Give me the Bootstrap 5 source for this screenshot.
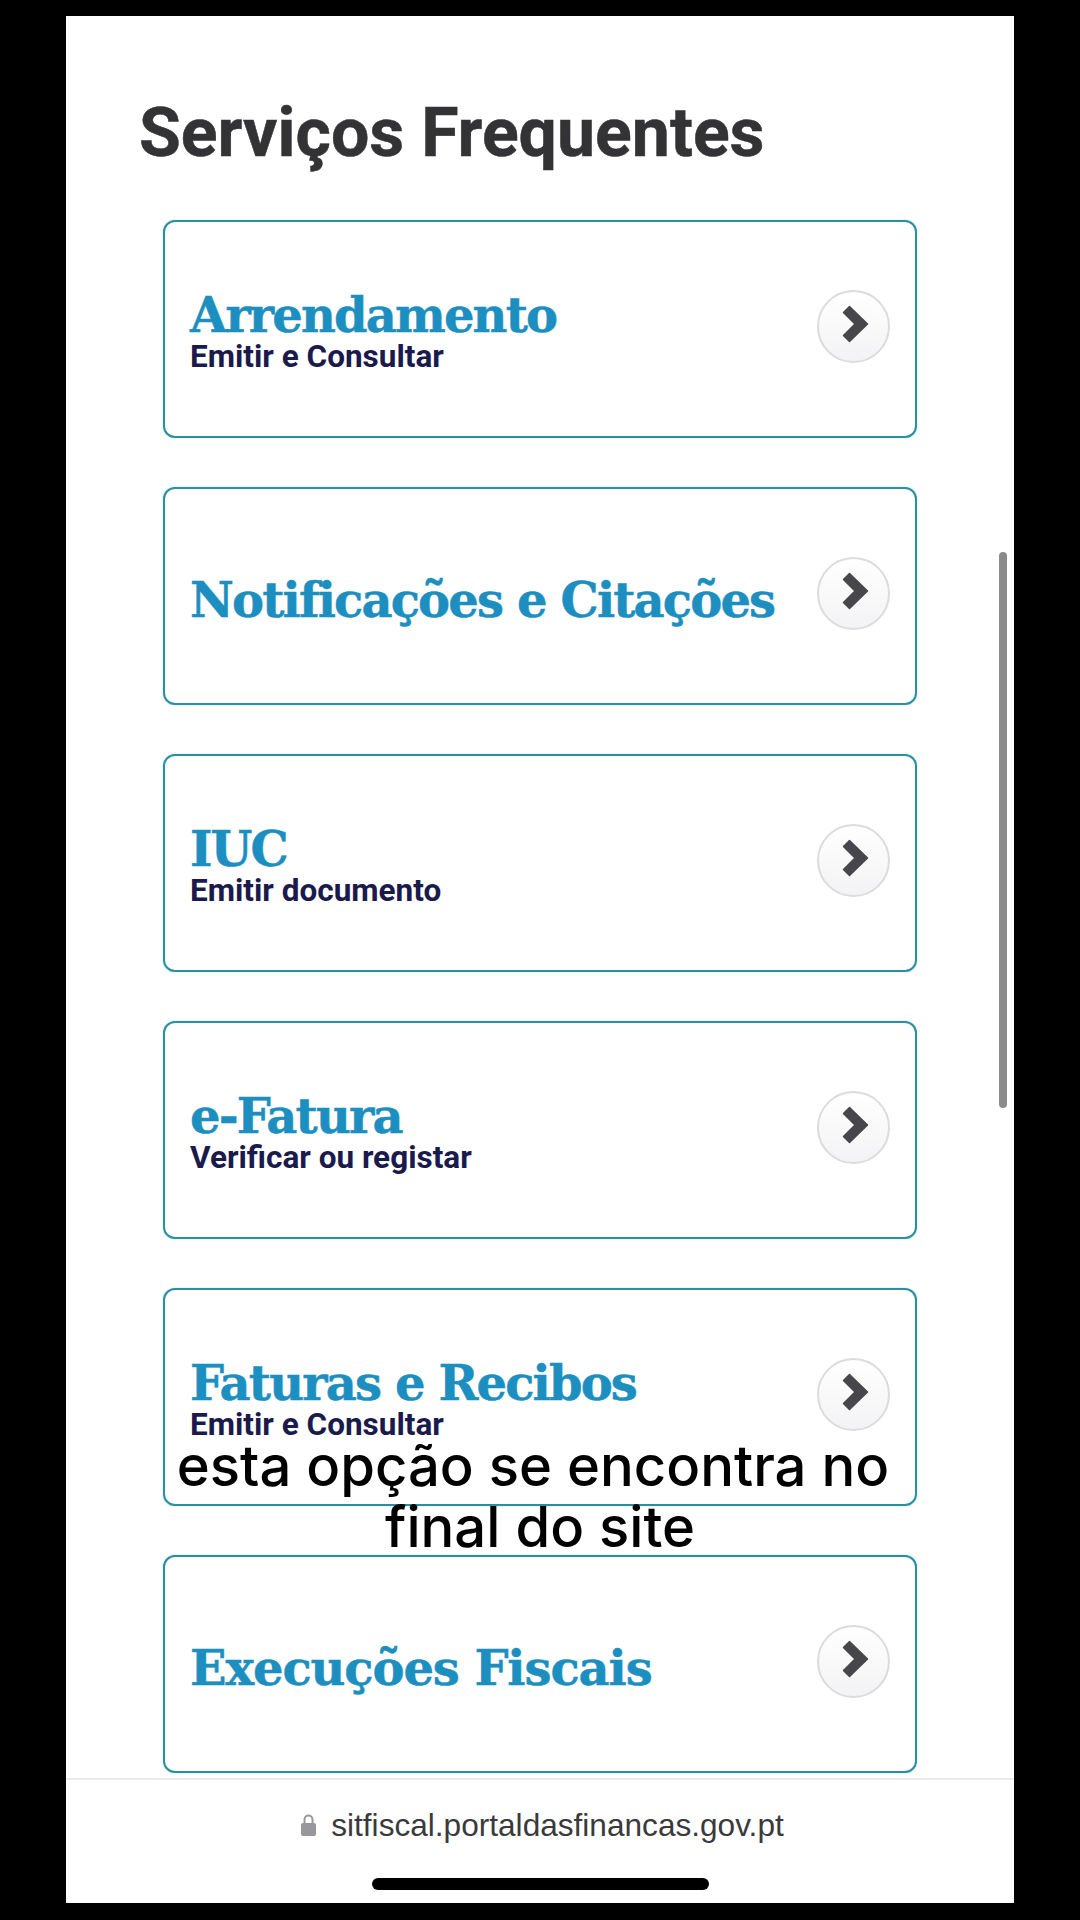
<!doctype html>
<html lang="pt">
<head>
<meta charset="utf-8">
<title>Serviços Frequentes</title>
<link href="https://cdn.jsdelivr.net/npm/bootstrap@5.3.0/dist/css/bootstrap.min.css" rel="stylesheet">
<style>
html,body{height:100%;background:#000;margin:0;overflow:hidden}
.stage{width:1080px;height:1920px;padding:16px 66px 17px;background:#000}
.screen{height:100%;background:#fff;position:relative;overflow:hidden}
.page-area{min-height:0;padding:80px 97px 0 74px}
.page-title{font-family:Roboto,sans-serif;font-weight:700;font-size:68px;line-height:74px;color:#333336;margin:0 0 50px -1px;-webkit-text-stroke:.5px #333336}
.svc-list{gap:49px;margin-left:23px}
.svc-card{height:218px;border:2px solid #2c8ea3;border-radius:12px;padding:0 25px;flex:0 0 auto;box-shadow:0 0 2px rgba(90,200,220,.55)}
.svc-text{padding-top:2px}
.svc-solo{padding-top:7px}
.svc-title{font-family:"DejaVu Serif",serif;font-weight:700;font-size:48px;line-height:52px;color:#1c8fc0;letter-spacing:-1.85px;white-space:nowrap;-webkit-text-stroke:.5px #1c8fc0}
.svc-wide{letter-spacing:-1.1px}
.svc-sub{font-family:Roboto,sans-serif;font-weight:700;font-size:31.5px;line-height:30px;color:#1b1a4d;white-space:nowrap;margin-top:1px}
.go{width:73px;height:73px;border-radius:50%;border:2px solid #dcdcdc;background:linear-gradient(#fff,#f3f3f5);margin-top:-6px;flex:0 0 auto}
.go svg{margin:-4px 0 0 4px}
.url-bar{height:125px;border-top:2px solid #ececec;flex:0 0 auto}
.url{font-family:"Liberation Sans",sans-serif;font-size:31.6px;line-height:34px;color:#3a3a3c;margin:28px 0 0 4px;gap:14px}
.home-bar{width:337px;height:12px;background:#000;border-radius:6px;margin-top:36px}
.scroll-thumb{position:absolute;left:933px;top:536px;width:8px;height:556px;background:#8a8a8a;border-radius:4px}
.caption{position:absolute;left:0;right:0;top:1420px;font-family:Inter,sans-serif;font-weight:500;font-size:56.2px;line-height:61px;color:#000;text-align:center;margin:0}
.cap-first{margin-right:14px}
</style>
</head>
<body>
<div class="stage">
  <div class="screen d-flex flex-column">
    <main class="page-area flex-grow-1 overflow-hidden">
      <h1 class="page-title">Serviços Frequentes</h1>
      <div class="svc-list d-flex flex-column">
        <div class="card svc-card flex-row align-items-center justify-content-between">
          <div class="svc-text"><div class="svc-title">Arrendamento</div><div class="svc-sub">Emitir e Consultar</div></div>
          <span class="go d-flex align-items-center justify-content-center"><svg width="28" height="38" viewBox="0 0 28 38"><path d="M1.5 7.5 L7.5 1.5 L25.5 19 L7.5 36.5 L1.5 30.5 L13 19 Z" fill="#47474b" stroke="#47474b" stroke-width="1.5" stroke-linejoin="round"/></svg></span>
        </div>
        <div class="card svc-card flex-row align-items-center justify-content-between">
          <div class="svc-solo"><div class="svc-title">Notificações e Citações</div></div>
          <span class="go d-flex align-items-center justify-content-center"><svg width="28" height="38" viewBox="0 0 28 38"><path d="M1.5 7.5 L7.5 1.5 L25.5 19 L7.5 36.5 L1.5 30.5 L13 19 Z" fill="#47474b" stroke="#47474b" stroke-width="1.5" stroke-linejoin="round"/></svg></span>
        </div>
        <div class="card svc-card flex-row align-items-center justify-content-between">
          <div class="svc-text"><div class="svc-title">IUC</div><div class="svc-sub">Emitir documento</div></div>
          <span class="go d-flex align-items-center justify-content-center"><svg width="28" height="38" viewBox="0 0 28 38"><path d="M1.5 7.5 L7.5 1.5 L25.5 19 L7.5 36.5 L1.5 30.5 L13 19 Z" fill="#47474b" stroke="#47474b" stroke-width="1.5" stroke-linejoin="round"/></svg></span>
        </div>
        <div class="card svc-card flex-row align-items-center justify-content-between">
          <div class="svc-text"><div class="svc-title">e-Fatura</div><div class="svc-sub">Verificar ou registar</div></div>
          <span class="go d-flex align-items-center justify-content-center"><svg width="28" height="38" viewBox="0 0 28 38"><path d="M1.5 7.5 L7.5 1.5 L25.5 19 L7.5 36.5 L1.5 30.5 L13 19 Z" fill="#47474b" stroke="#47474b" stroke-width="1.5" stroke-linejoin="round"/></svg></span>
        </div>
        <div class="card svc-card flex-row align-items-center justify-content-between">
          <div class="svc-text"><div class="svc-title">Faturas e Recibos</div><div class="svc-sub">Emitir e Consultar</div></div>
          <span class="go d-flex align-items-center justify-content-center"><svg width="28" height="38" viewBox="0 0 28 38"><path d="M1.5 7.5 L7.5 1.5 L25.5 19 L7.5 36.5 L1.5 30.5 L13 19 Z" fill="#47474b" stroke="#47474b" stroke-width="1.5" stroke-linejoin="round"/></svg></span>
        </div>
        <div class="card svc-card flex-row align-items-center justify-content-between">
          <div class="svc-solo"><div class="svc-title svc-wide">Execuções Fiscais</div></div>
          <span class="go d-flex align-items-center justify-content-center"><svg width="28" height="38" viewBox="0 0 28 38"><path d="M1.5 7.5 L7.5 1.5 L25.5 19 L7.5 36.5 L1.5 30.5 L13 19 Z" fill="#47474b" stroke="#47474b" stroke-width="1.5" stroke-linejoin="round"/></svg></span>
        </div>
      </div>
    </main>
    <footer class="url-bar d-flex flex-column align-items-center">
      <div class="url d-flex align-items-center">
        <svg width="17" height="24" viewBox="0 0 17 24"><path d="M4.5 11V6.5a4 4 0 0 1 8 0V11" fill="none" stroke="#98989c" stroke-width="2"/><rect x="1" y="10" width="15" height="13" rx="2" fill="#98989c"/></svg>
        <span>sitfiscal.portaldasfinancas.gov.pt</span>
      </div>
      <div class="home-bar"></div>
    </footer>
    <div class="scroll-thumb"></div>
    <p class="caption"><span class="cap-first">esta opção se encontra no</span><br>final do site</p>
  </div>
</div>
<script src="https://cdn.jsdelivr.net/npm/bootstrap@5.3.0/dist/js/bootstrap.bundle.min.js"></script>
</body>
</html>
